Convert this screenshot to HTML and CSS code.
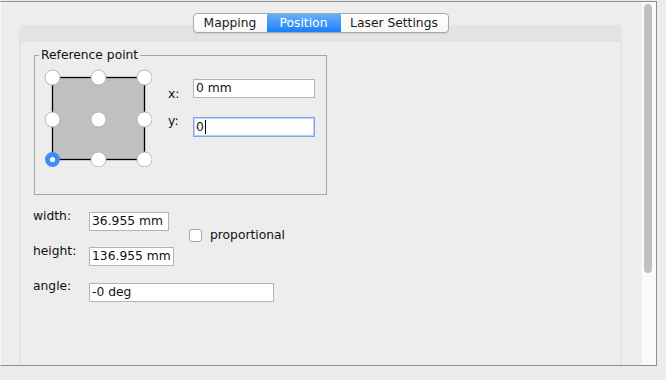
FILE: index.html
```html
<!DOCTYPE html>
<html lang="en">
<head>
    <meta charset="UTF-8">
    <title>Position</title>
    <link rel="stylesheet" href="styles.css">
</head>
<body>
    <div class="window">
        <div class="main">
            <div class="tabview">
                <div class="tabs">
                    <span class="tab first">Mapping</span>
                    <span class="tab active">Position</span>
                    <span class="tab last">Laser Settings</span>
                </div>
                <div class="panel">
                    <div class="panel-body">
                        <fieldset class="refpoint">
                            <legend>Reference point</legend>
                            <svg class="anchor-grid" width="108" height="98" viewBox="0 0 108 98">
                                <rect x="8.5" y="8.5" width="92" height="82" fill="#c0c0c0" stroke="#000" stroke-width="1.3"/>
                                <g fill="#fff" stroke="#b5b5b5" stroke-width="1">
                                    <circle cx="8.5" cy="8.5" r="7.5"/>
                                    <circle cx="54.5" cy="8.5" r="7.5"/>
                                    <circle cx="100.5" cy="8.5" r="7.5"/>
                                    <circle cx="8.5" cy="50.5" r="7.5"/>
                                    <circle cx="54.5" cy="50.5" r="7.5"/>
                                    <circle cx="100.5" cy="50.5" r="7.5"/>
                                    <circle cx="54.5" cy="90.5" r="7.5"/>
                                    <circle cx="100.5" cy="90.5" r="7.5"/>
                                </g>
                                <circle cx="8.5" cy="90.5" r="7.5" fill="#3a8ef6"/>
                                <circle cx="8.5" cy="90.5" r="2.6" fill="#fff"/>
                            </svg>
                            <div class="coords">
                                <div class="coord-row">
                                    <span class="coord-label lx">x:</span>
                                    <div class="field coord">0 mm</div>
                                </div>
                                <div class="coord-row">
                                    <span class="coord-label ly">y:</span>
                                    <div class="field coord focus">0<span class="caret"></span></div>
                                </div>
                            </div>
                        </fieldset>
                        <div class="size-grid">
                            <span class="label">width:</span>
                            <div class="field f-width">36.955 mm</div>
                            <div class="check"><span class="box"></span>proportional</div>
                            <span class="label">height:</span>
                            <div class="field f-height">136.955 mm</div>
                            <span class="label">angle:</span>
                            <div class="field f-angle">-0 deg</div>
                        </div>
                    </div>
                </div>
            </div>
        </div>
        <div class="scrollbar"><div class="thumb"></div></div>
    </div>
</body>
</html>
```

FILE: styles.css
```css
body {
    margin: 0;
    background-color: #ececec;
    font-family: "DejaVu Sans", sans-serif;
    font-size: 12.3px;
    line-height: 15px;
    color: #111;
}
.window {
    margin-top: 1px;
    width: 657px;
    height: 365px;
    box-sizing: border-box;
    border: 1px solid #8e8e8e;
    border-left-color: #f6f6f6;
    background-color: #ededed;
    display: flex;
    overflow: hidden;
}
.main {
    flex: 1;
    overflow: hidden;
}
.tabview {
    margin: 11px 0 0 18px;
    width: 603px;
}
.tabs {
    position: relative;
    z-index: 1;
    display: flex;
    width: 256px;
    height: 20px;
    box-sizing: border-box;
    margin: 0 auto;
    border: 1px solid #a9a9a9;
    border-radius: 4px;
    overflow: hidden;
    background: linear-gradient(#ffffff, #f7f7f7);
    box-shadow: 0 1px 1px rgba(0,0,0,0.08);
}
.tab {
    width: 74px;
    text-align: center;
    line-height: 17px;
    padding-top: 1px;
    color: #1a1a1a;
}
.tab.first {
    width: 73px;
}
.tab.last {
    width: 107px;
}
.tab.active {
    background: linear-gradient(#6ab1fb, #1a7ef6);
    color: #fff;
}
.panel {
    margin-top: -8px;
    height: 400px;
    box-sizing: border-box;
    padding: 17px 2px 0;
    background-color: #e3e3e3;
    border-radius: 5px 5px 0 0;
}
.panel-body {
    height: 100%;
    background-color: #ededed;
    padding: 1px 0 0 13px;
    box-sizing: border-box;
}
.refpoint {
    margin: 5px 0 0 0;
    padding: 0;
    width: 293px;
    box-sizing: border-box;
    border: 1px solid #a6a6a6;
    display: flex;
    align-items: flex-start;
}
.refpoint legend {
    margin-left: 4px;
    padding: 0 2px;
    line-height: 14px;
}
.anchor-grid {
    display: block;
    margin: 7px 0 27px 9px;
}
.coords {
    margin: 17px 0 0 16px;
}
.coord-row {
    display: flex;
    align-items: flex-start;
}
.coord-row + .coord-row {
    margin-top: 15px;
}
.coord-label {
    width: 25px;
}
.lx {
    margin-top: 8px;
}
.ly {
    margin-top: -3px;
}
.field {
    height: 19px;
    box-sizing: border-box;
    border: 1px solid #b3b3b3;
    background-color: #fff;
    padding: 0 2px;
    line-height: 17px;
    white-space: nowrap;
    color: #111;
}
.field.coord {
    width: 122px;
}
.field.focus {
    height: 20px;
    border-color: #7ea8e6;
    box-shadow: inset 0 0 0 1px #b9d1f4;
    line-height: 18px;
}
.caret {
    display: inline-block;
    width: 1px;
    height: 14px;
    background-color: #000;
    vertical-align: -3px;
    margin-left: 1px;
}
.size-grid {
    display: grid;
    grid-template-columns: 56px 100px auto;
    row-gap: 16px;
    margin: 17px 0 0 -1px;
    align-items: start;
}
.label {
    margin-top: -3px;
}
.f-width {
    width: 80px;
}
.f-height {
    width: 85px;
}
.f-angle {
    width: 185px;
    grid-column: 2 / span 2;
    margin-top: 1px;
}
.check {
    grid-row: span 2;
    display: flex;
    align-items: center;
    margin-top: 16px;
}
.check .box {
    width: 13px;
    height: 13px;
    box-sizing: border-box;
    border: 1px solid #a9a9a9;
    border-radius: 3px;
    background-color: #fff;
    margin-right: 8px;
}
.scrollbar {
    width: 15px;
    background-color: #fafafa;
    border-left: 1px solid #f0f0f0;
    box-sizing: border-box;
}
.thumb {
    margin: 2px 0 0 2px;
    width: 8px;
    height: 269px;
    border-radius: 4px;
    background-color: #c1c1c1;
}
```
